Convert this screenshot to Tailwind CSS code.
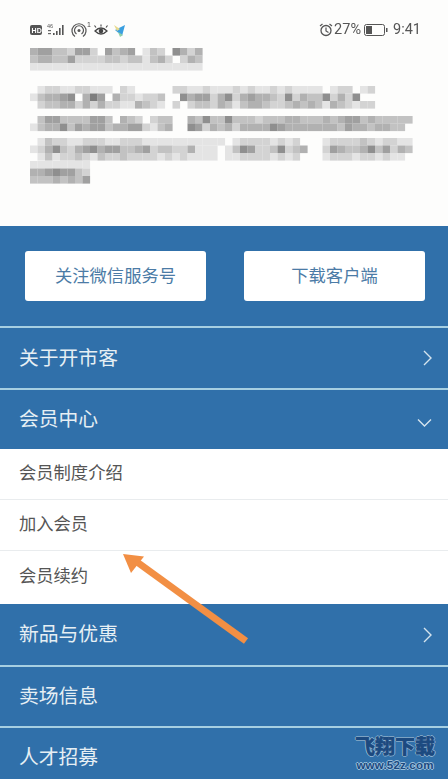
<!DOCTYPE html>
<html lang="zh-CN">
<head>
<meta charset="utf-8">
<script src="https://cdn.jsdelivr.net/npm/@tailwindcss/browser@4"></script>
</head>
<body class="m-0 bg-white">
<div class="relative w-[448px] h-[779px] overflow-hidden bg-white font-['Noto_Sans_CJK_SC','Noto_Sans',sans-serif]">

  <!-- Blurred phone screenshot header -->
  <header class="relative h-[226px] bg-[#fdfdfc]">
    <div class="flex justify-between items-center pl-[30px] pr-[27px] pt-[21px] h-[39px] blur-[0.5px] text-[#555]">
      <div class="flex items-center">
        <svg width="100" height="18" viewBox="0 0 100 18">
          <rect x="0" y="4" width="12" height="10" rx="2" fill="#555"/>
          <text x="1.600" y="12" font-size="7" font-weight="700" fill="#fff" font-family="Liberation Sans">HD</text>
          <text x="17" y="7" font-size="5.500" fill="#555" font-family="Liberation Sans">46</text>
          <rect x="18" y="9" width="3" height="1.200" fill="#666"/><rect x="18" y="12" width="3" height="1.200" fill="#666"/>
          <rect x="23" y="12" width="1.600" height="2" fill="#555"/><rect x="26" y="10" width="1.600" height="4" fill="#555"/><rect x="29" y="7" width="1.600" height="7" fill="#555"/><rect x="32" y="4" width="1.600" height="10" fill="#555"/>
          <path d="M45 15.500a7 7 0 1 1 8 0M46.500 13a4.500 4.500 0 1 1 5 0" fill="none" stroke="#555" stroke-width="1.200"/>
          <circle cx="49" cy="9.500" r="1.500" fill="#555"/>
          <text x="57" y="5.500" font-size="7" fill="#444" font-family="Liberation Sans">1</text>
          <path d="M65 10q6-6 12 0q-6 6-12 0z" fill="none" stroke="#444" stroke-width="1.300"/>
          <circle cx="71" cy="10" r="2.300" fill="#444"/>
          <path d="M66 6.500l-1.500-2M71 5.500V3.500M76 6.500l1.500-2" stroke="#444" stroke-width="1.100"/>
          <path d="M85 9l10-5-3 11z" fill="#3a9fe0"/>
          <path d="M84 4l6 4-3 2z" fill="#e8d98c"/>
          <path d="M88 11l5 3-3 2z" fill="#8fd0a8"/>
        </svg>
      </div>
      <div class="flex items-center text-[14.500px] leading-none font-['Roboto',sans-serif]">
        <svg width="14" height="14" viewBox="0 0 14 14" class="mr-[1px]">
          <circle cx="7" cy="7.500" r="5" fill="none" stroke="#555" stroke-width="1.300"/>
          <path d="M7 4.500V8l2.500 1.500M1 3l2.500-2M13 3l-2.500-2" fill="none" stroke="#555" stroke-width="1.200"/>
        </svg>
        <span>27%</span>
        <svg width="25" height="12" viewBox="0 0 25 12" class="ml-[3px] mr-[4px]">
          <rect x="0.500" y="0.500" width="20" height="11" rx="2" fill="none" stroke="#555"/>
          <rect x="2" y="2" width="6" height="8" fill="#555"/>
          <rect x="22" y="4" width="1.500" height="4" fill="#555"/>
        </svg>
        <span>9:41</span>
      </div>
    </div>
    <svg id="mosaic" class="absolute left-0 top-0 blur-[0.7px]" width="448" height="226" viewBox="0 0 448 226"></svg>
  </header>

  <!-- Blue menu -->
  <main class="bg-[#3070aa]">
    <div class="flex justify-between pt-[25px] pb-[25px] pl-[25px] pr-[23px] h-[100px]">
      <a class="w-[181px] h-[50px] pb-[3px] flex items-center justify-center rounded-[3px] bg-white text-[#4b7ba6] text-[17.300px]">关注微信服务号</a>
      <a class="w-[181px] h-[50px] pb-[3px] flex items-center justify-center rounded-[3px] bg-white text-[#4b7ba6] text-[17.300px]">下载客户端</a>
    </div>
    <div class="h-[2px] bg-[#a6cfe2]"></div>
    <div class="flex items-center justify-between h-[60px] pb-[3px] pl-[19px] pr-[15px] text-[19.800px] text-[#e6eff4]">
      <span>关于开市客</span>
      <svg width="12" height="18" viewBox="0 0 12 18" class="mt-[3px]"><path d="M3 2l7 7-7 7" fill="none" stroke="#d5e4ee" stroke-width="1.400"/></svg>
    </div>
    <div class="h-[2px] bg-[#a6cfe2]"></div>
    <div class="flex items-center justify-between h-[59px] pb-[3px] pl-[19px] pr-[16px] text-[19.800px] text-[#e6eff4]">
      <span>会员中心</span>
      <svg width="15" height="10" viewBox="0 0 15 10" class="mt-[9px]"><path d="M1 1.500l6.500 6.500 6.500-6.500" fill="none" stroke="#d5e4ee" stroke-width="1.400"/></svg>
    </div>
    <div class="bg-white text-[17.300px] text-[#555]">
      <div class="flex items-center h-[51px] pb-[4px] pl-[19px] border-b border-[#e9ecee]">会员制度介绍</div>
      <div class="flex items-center h-[51px] pb-[4px] pl-[19px] border-b border-[#e9ecee]">加入会员</div>
      <div class="flex items-center h-[53px] pb-[6px] pl-[19px]">会员续约</div>
    </div>
    <div class="flex items-center justify-between h-[61px] pb-[3px] pl-[19px] pr-[15px] text-[19.800px] text-[#e6eff4]">
      <span>新品与优惠</span>
      <svg width="12" height="18" viewBox="0 0 12 18" class="mt-[3px]"><path d="M3 2l7 7-7 7" fill="none" stroke="#d5e4ee" stroke-width="1.400"/></svg>
    </div>
    <div class="h-[2px] bg-[#a6cfe2]"></div>
    <div class="flex items-center h-[59px] pb-[3px] pl-[19px] text-[19.800px] text-[#e6eff4]">卖场信息</div>
    <div class="h-[2px] bg-[#a6cfe2]"></div>
    <div class="flex items-center h-[59px] pb-[3px] pl-[19px] text-[19.800px] text-[#e6eff4]">人才招募</div>
  </main>

  <!-- Annotation arrow -->
  <svg class="absolute left-[110px] top-[545px]" width="150" height="110" viewBox="110 545 150 110">
    <path d="M137 562L246 641" stroke="#f28f44" stroke-width="7" fill="none"/>
    <path d="M123 554L144 556.500L131 573z" fill="#f28f44"/>
  </svg>

  <!-- Watermark -->
  <div class="absolute left-[353px] top-[735px] w-[84px] flex flex-col items-center">
    <span class="text-[20px] leading-[22px] font-black text-[#1c4a80] [-webkit-text-stroke:0.5px_#1c4a80] [text-shadow:1px_0_#9cc0dc,-1px_0_#9cc0dc,0_1px_#9cc0dc,0_-1px_#9cc0dc]">飞翔下载</span>
    <span class="mt-[3px] text-[11.500px] leading-[11px] font-bold font-['Liberation_Sans',sans-serif] tracking-[0.200px] text-[#1c4a80] [text-shadow:1px_0_#9cc0dc,-1px_0_#9cc0dc,0_1px_#9cc0dc,0_-1px_#9cc0dc]">www.52z.com</span>
  </div>
</div>

<script>
  // Mosaic data: [top y, left x, darkness digits per 7.5px cell]
  var rows = [
    [48, 30, "45533255205345013206424"],
    [55.5, 30, "34433522223323313420243"],
    [63, 30, "11111111111111111111111"],
    [86, 30, "012211221110210000022112111212112121111012201200"],
    [93.5, 30, "134456047504221223006455246245443262433624260000"],
    [101, 30, "023344242422114321020233243134432234343143212200"],
    [116, 30, "035533335530432023300436336333233344333434553433333"],
    [123.5, 30, "134463545534455213400652434244446544444443544344330"],
    [138, 30, "013221122211222111111111110122221212000122223212211"],
    [145.5, 30, "124632456455334523322411101365223623400254334635243"],
    [153, 30, "013122321322322221212111101122221212000122212212110"],
    [161, 30, "1111111100000000000000000000000000"],
    [168.5, 30, "4456553200000000000000000000000000"],
    [176, 30, "3334343500000000000000000000000000"]
  ];
  var out = "";
  rows.forEach(function (r) {
    r[2].split("").forEach(function (d, i) {
      var n = +d;
      if (!n) return;
      var g = 245 - n * 17;
      out += '<rect x="' + (r[1] + i * 7.5) + '" y="' + r[0] + '" width="7.6" height="7.6" fill="rgb(' + g + ',' + g + ',' + g + ')"/>';
    });
  });
  document.getElementById("mosaic").innerHTML = out;
</script>
</body>
</html>
